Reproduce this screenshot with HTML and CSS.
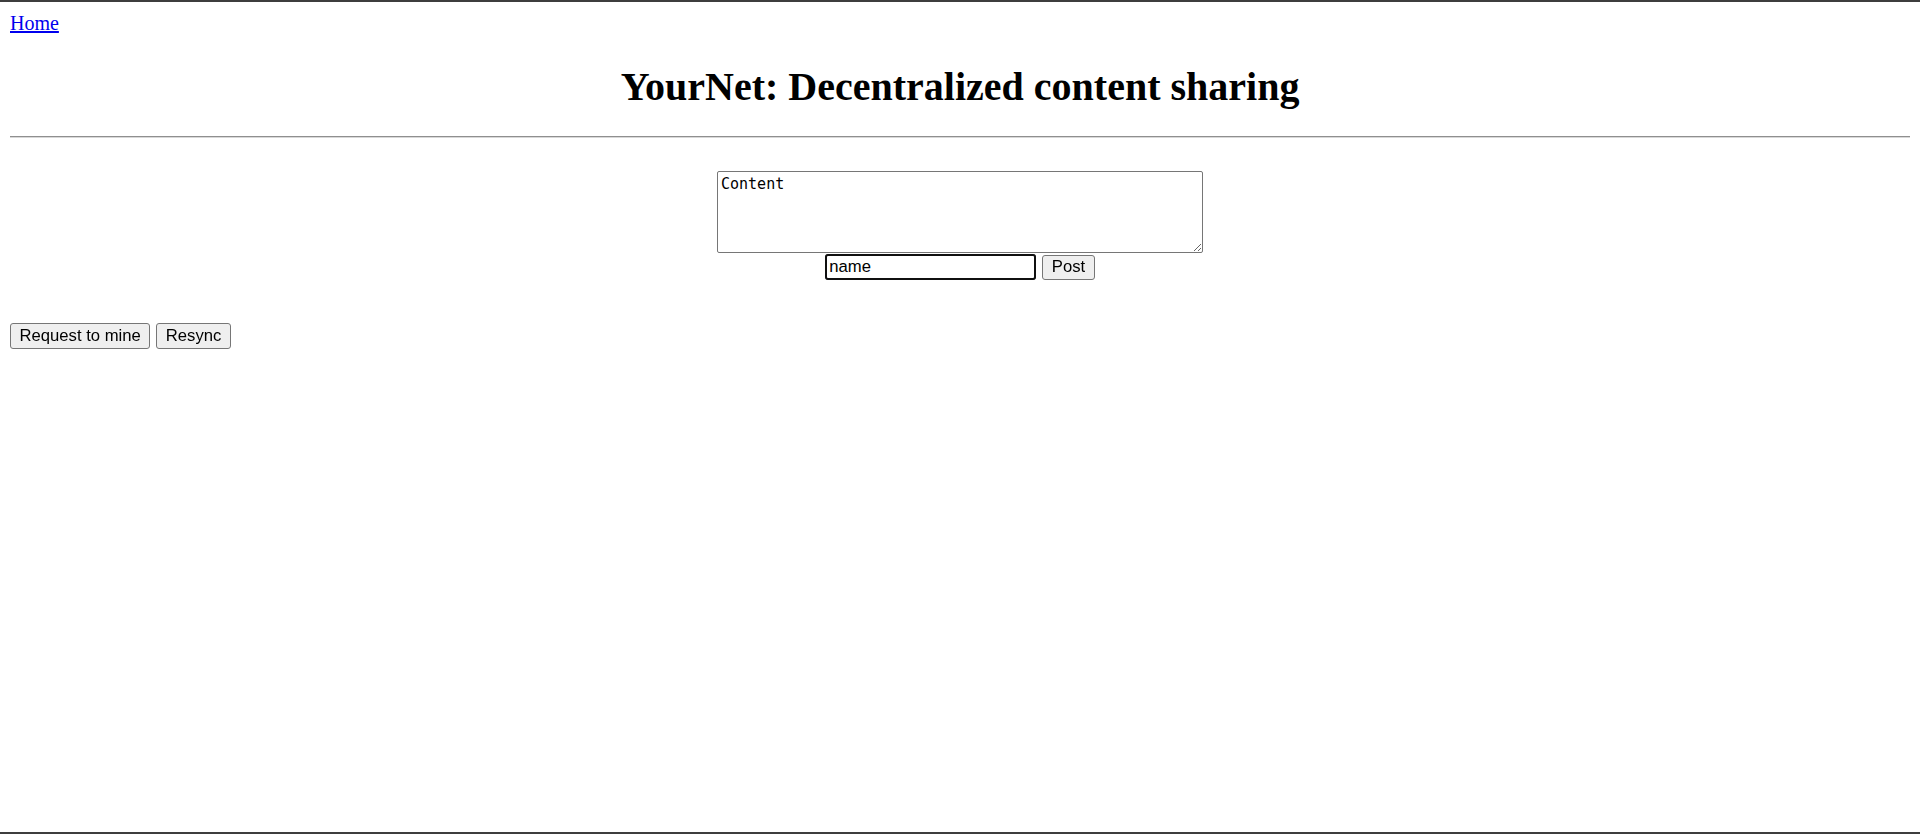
FILE: index.html
```html
<!DOCTYPE html>
<html lang="en">
<head>
<meta charset="utf-8">
<title>YourNet</title>
<link rel="stylesheet" href="styles.css">
</head>
<body>
<nav class="top-nav"><a class="home-link" href="#">Home</a></nav>
<h1 class="title">YourNet: Decentralized content sharing</h1>
<hr class="rule">
<form class="post-form">
  <textarea class="content-box">Content</textarea>
  <div class="post-row">
    <input class="name-input" type="text" value="name" autofocus>
    <button class="btn" type="button">Post</button>
  </div>
</form>
<div class="actions">
  <button class="btn" type="button">Request to mine</button>
  <button class="btn" type="button">Resync</button>
</div>
</body>
</html>
```

FILE: styles.css
```css
html {
  border-top: 2px solid #3e3e3e;
  background: #ffffff;
}

body {
  margin: 10px;
  font-family: "Liberation Serif", "Times New Roman", serif;
  font-size: 20px;
  color: #000000;
}

body::after {
  content: "";
  position: fixed;
  left: 0;
  right: 0;
  bottom: 0;
  height: 2px;
  background: #3e3e3e;
}

.top-nav {
  line-height: 23px;
}

.home-link {
  color: #0000ee;
  text-decoration: underline;
}

.title {
  margin: 29px 0 26px;
  font-size: 40px;
  line-height: 46px;
  font-weight: bold;
  text-align: center;
}

.rule {
  margin: 0;
  height: 0;
  border: none;
  border-top: 1px solid #8f8f8f;
  border-bottom: 1px solid #d8d8d8;
}

.post-form {
  margin: 33px 0 0;
  display: flex;
  flex-direction: column;
  align-items: center;
  gap: 1px;
}

.content-box {
  box-sizing: border-box;
  width: 486px;
  height: 82px;
  margin: 0;
  padding: 3px 3px;
  border: 1px solid #767676;
  border-radius: 2px;
  font-family: "DejaVu Sans Mono", "Liberation Mono", monospace;
  font-size: 15px;
  line-height: 18px;
  color: #000000;
  background: #ffffff;
}

.post-row {
  display: flex;
  align-items: center;
  gap: 6px;
}

.name-input {
  box-sizing: border-box;
  width: 211px;
  height: 26px;
  margin: 0;
  padding: 1px 3px;
  border: 1px solid #767676;
  border-radius: 3px;
  outline: 2px solid #101010;
  outline-offset: -2px;
  font-family: "Liberation Sans", Arial, sans-serif;
  font-size: 16.67px;
  color: #000000;
  background: #ffffff;
}

.btn {
  box-sizing: border-box;
  height: 25px;
  margin: 0;
  padding: 0 8.5px;
  border: 1px solid #767676;
  border-radius: 3px;
  background: #efefef;
  font-family: "Liberation Sans", Arial, sans-serif;
  font-size: 16.67px;
  color: #000000;
}

.actions {
  margin-top: 43px;
  display: flex;
  gap: 6px;
}

.actions .btn {
  height: 26px;
}
```
